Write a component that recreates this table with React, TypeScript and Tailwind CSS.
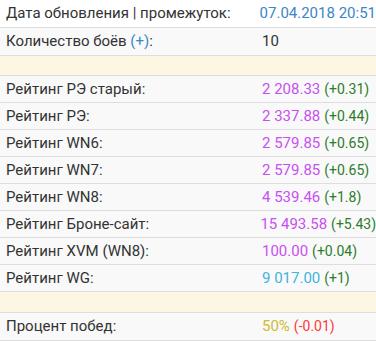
const font = { fontFamily: 'Roboto, "Noto Sans", sans-serif' }

type Row = {
  label: React.ReactNode
  value: string
  color: string
  delta?: string
  deltaColor?: string
}

const ratings: Row[] = [
  { label: 'Рейтинг РЭ старый:', value: '2 208.33', color: 'text-[#c750f2]', delta: '(+0.31)' },
  { label: 'Рейтинг РЭ:',        value: '2 337.88', color: 'text-[#c750f2]', delta: '(+0.44)' },
  { label: 'Рейтинг WN6:',       value: '2 579.85', color: 'text-[#c750f2]', delta: '(+0.65)' },
  { label: 'Рейтинг WN7:',       value: '2 579.85', color: 'text-[#c750f2]', delta: '(+0.65)' },
  { label: 'Рейтинг WN8:',       value: '4 539.46', color: 'text-[#c750f2]', delta: '(+1.8)' },
  { label: 'Рейтинг Броне-сайт:', value: '15 493.58', color: 'text-[#c750f2]', delta: '(+5.43)' },
  { label: 'Рейтинг XVM (WN8):', value: '100.00',   color: 'text-[#c750f2]', delta: '(+0.04)' },
  { label: 'Рейтинг WG:',        value: '9 017.00', color: 'text-[#3fb4dc]', delta: '(+1)' },
]

function StatRow({ row, bg = 'bg-[#f9f9f9]', h = 'h-[27px]' }: { row: Row; bg?: string; h?: string }) {
  return (
    <div className={`flex ${h} items-center border-b border-[#dddddd] ${bg}`}>
      <div className="w-[262px] pl-[6px] text-[#333333]">{row.label}</div>
      <div className="flex-1 whitespace-nowrap">
        <span className={row.color}>{row.value}</span>
        {row.delta && (
          <span className={`ml-[4px] text-[14px] ${row.deltaColor ?? 'text-[#2b7d2b]'}`}>{row.delta}</span>
        )}
      </div>
    </div>
  )
}

function Spacer({ h }: { h: string }) {
  return <div className={`${h} border-b border-[#dddddd] bg-[#fcf6e3]`} />
}

export default function App() {
  return (
    <div className="w-[376px] h-[342px] overflow-hidden bg-white text-[15px] leading-none" style={font}>
      <StatRow h="h-[28px]" bg="bg-white" row={{ label: 'Дата обновления | промежуток:', value: '07.04.2018 20:51', color: 'text-[#3a86c8]' }} />
      <StatRow h="h-[28px]" row={{
        label: <>Количество боёв <span className="text-[#3a86c8]">(+)</span>:</>,
        value: '10', color: 'text-[#333333]',
      }} />
      <Spacer h="h-[20px]" />
      {ratings.map((r, i) => <StatRow key={i} row={r} />)}
      <Spacer h="h-[21px]" />
      <StatRow h="h-[28px]" row={{ label: 'Процент побед:', value: '50%', color: 'text-[#cbbb35]', delta: '(-0.01)', deltaColor: 'text-[#ff3838]' }} />
    </div>
  )
}
